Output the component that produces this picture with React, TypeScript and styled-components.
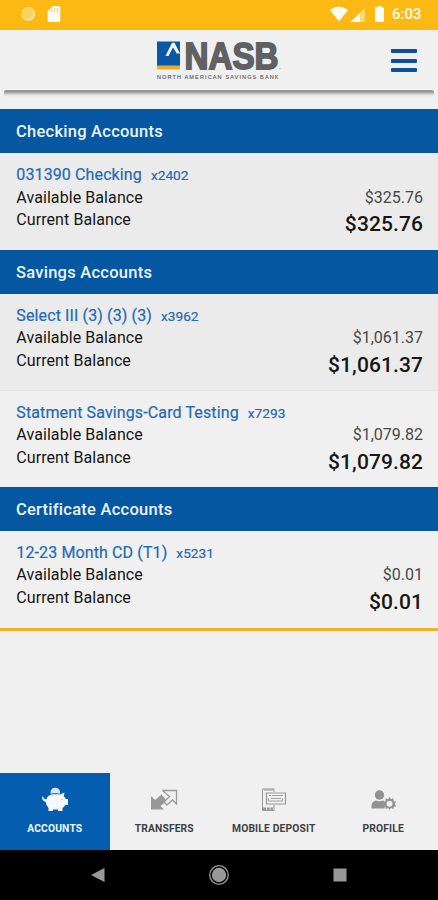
import React from "react";
import styled, { createGlobalStyle } from "styled-components";

const GlobalStyle = createGlobalStyle`
  * { box-sizing: border-box; }
  html, body, #root { margin: 0; height: 100%; }
  body { background: #f0f0f0; overflow: hidden; font-family: Roboto, sans-serif; }
`;

const Screen = styled.div`
  width: 438px;
  height: 900px;
  display: flex;
  flex-direction: column;
  background: #f0f0f0;
`;

const StatusBar = styled.div`
  height: 30px;
  flex: none;
  display: flex;
  align-items: center;
  justify-content: space-between;
  padding: 0 16px 3px 20px;
  background: #fdb913;
`;

const StatusGroup = styled.div`
  display: flex;
  align-items: center;
`;

const Clock = styled.span`
  width: 30px;
  margin-left: 6px;
  padding-top: 1px;
  color: #fffdf3;
  font-size: 15px;
  font-weight: 500;
  line-height: 20px;
  white-space: nowrap;
`;

const Header = styled.header`
  height: 60px;
  flex: none;
  margin: 0 5px;
  display: grid;
  grid-template-columns: 1fr 126px 1fr;
  align-items: start;
  padding: 10px 15px 0 14px;
`;

const HeaderShadow = styled.div`
  height: 7px;
  flex: none;
  margin: 0 4px 12px;
  background: linear-gradient(#a2a2a2, #8f8f8f 20%, #cbcbcb 55%, #e8e8e8 80%, #f0f0f0);
  border-radius: 2px;
`;

const LogoBox = styled.div`
  grid-column: 2;
  height: 42px;
`;

const LogoDrawing = styled.svg`
  display: block;
  overflow: visible;
`;

const MenuButton = styled.button`
  justify-self: end;
  margin-top: 9px;
  width: 27px;
  height: 23px;
  padding: 0;
  border: 0;
  background: none;
  display: flex;
  flex-direction: column;
  justify-content: space-between;
`;

const MenuBar = styled.span`
  width: 26px;
  height: 4px;
  border-radius: 1px;
  background: #10509a;
`;

const AccountList = styled.main`
  flex: none;
  height: 522px;
  border-bottom: 3px solid #eeb02a;
`;

const GroupTitle = styled.h2`
  margin: 0;
  height: 44px;
  padding: 1px 16px 0;
  font-size: 16.5px;
  font-weight: 500;
  line-height: 44px;
  letter-spacing: 0.25px;
  color: #eaf3fc;
  background: #0457a0;
`;

const Account = styled.section<{ $shaded?: boolean }>`
  height: 96.5px;
  padding: 11.2px 15px 0 16.3px;
  background: ${(p) => (p.$shaded ? "#ebebeb" : "#f0f0f0")};
  & + & { border-top: 1px solid #e2e2e2; padding-top: 10.5px; }
`;

const AccountName = styled.div`
  height: 22.5px;
  font-size: 16px;
  line-height: 22.5px;
  letter-spacing: 0.12px;
  color: #2469b5;
  -webkit-text-stroke: 0.2px #2469b5;
`;

const Mask = styled.span`
  margin-left: 9px;
  font-size: 13.7px;
  letter-spacing: 0;
`;

const BalanceRow = styled.div`
  height: 22.5px;
  display: flex;
  justify-content: space-between;
  font-size: 16px;
  line-height: 22.5px;
  letter-spacing: 0.08px;
  color: #161616;
`;

const Available = styled.span`
  color: #484848;
  letter-spacing: 0;
`;

const Current = styled.span`
  font-size: 21px;
  font-weight: 500;
  line-height: 31px;
  letter-spacing: 0.1px;
`;

const TabBar = styled.nav`
  height: 77px;
  flex: none;
  margin-top: auto;
  display: grid;
  grid-template-columns: repeat(4, 1fr);
`;

const Tab = styled.div<{ $active?: boolean }>`
  display: flex;
  flex-direction: column;
  align-items: center;
  padding-top: 14px;
  background: ${(p) => (p.$active ? "#045daf" : "#f0f0f0")};
  color: ${(p) => (p.$active ? "#eef6ff" : "#404040")};
`;

const TabLabel = styled.span`
  margin-top: 9px;
  font-size: 10.3px;
  line-height: 14px;
  font-weight: 700;
  letter-spacing: 0.15px;
  white-space: nowrap;
`;

const SystemBar = styled.div`
  height: 50px;
  flex: none;
  display: grid;
  grid-template-columns: 196px 46px 196px;
  align-items: center;
  justify-items: center;
  background: #000;
`;

const StatusIcons = () => (
  <>
    <svg width="44" height="20" viewBox="0 0 44 20">
      <circle cx="8.3" cy="10" r="7" fill="#ffe193" />
      <circle cx="7.5" cy="9.2" r="5.7" fill="#fed25e" />
      <path d="M33 2h6a1.3 1.3 0 0 1 1.3 1.3v13.4A1.3 1.3 0 0 1 39 18H29a1.3 1.3 0 0 1-1.3-1.3V7z" fill="#fffdf5" />
      <path d="M31.5 5v3M34.5 4v4M37.5 4v4" stroke="#fed05b" strokeWidth="1.2" />
    </svg>
    <StatusGroup>
      <svg width="56" height="20" viewBox="0 0 56 20">
        <path d="M0 6Q9 -1 18 6L9 17.5z" fill="#fffdf5" />
        <path d="M35 4v14H20.500z" fill="#fed86f" />
        <path d="M30 9v9h-9.500z" fill="#fffdf5" />
        <path d="M47.500 2h4v1.500h1.500q1 0 1 1v12.500q0 1-1 1h-7q-1 0-1-1V4.500q0-1 1-1h1.500z" fill="#fffdf5" />
      </svg>
      <Clock>6:03</Clock>
    </StatusGroup>
  </>
);

const Logo = () => (
  <LogoDrawing width="126" height="42" viewBox="0 0 126 42">
    <path d="M1 1.500h23V26H1z" fill="#0858a5" />
    <path d="M1 25.500h23v4H1z" fill="#e9ad2c" />
    <path d="M9.500 16h3l4.500-8.500 3.800 6H24L18.500 2.700H16z" fill="#f4f7fa" />
    <text x="28.500" y="28.700" textLength="94" lengthAdjust="spacingAndGlyphs" fontFamily="Liberation Sans, sans-serif" fontSize="37.500" fontWeight="700" fill="#606163" stroke="#606163" strokeWidth="1.800">NASB</text>
    <circle cx="124" cy="28.500" r="0.600" fill="#999" />
    <text x="1" y="38.800" textLength="121.500" fontFamily="Liberation Sans, sans-serif" fontSize="5.500" fill="#606060" stroke="#606060" strokeWidth="0.150">NORTH AMERICAN SAVINGS BANK</text>
  </LogoDrawing>
);

const PiggyIcon = () => (
  <svg width="28" height="26" viewBox="0 0 28 26" fill="#f6faff">
    <path d="M9.500 5.500a4.800 4.800 0 0 1 9.600 0l-.2 1.200q-4.500-1.300-9.200.1z" fill="#d7e7f6" />
    <path d="M8 8.500Q13 5.500 19 7.500l4.500-2-.7 3.800q1.300 1.200 1.900 2.700H27v6h-2.800q-.9 1.900-2.700 3V24h-4.500v-1.500h-5V24H7.500v-3Q5 18.500 4.700 15 1.300 14 1 10.500l1-1.500q.3 3 3.200 3.500Q6 10 8 8.500z" />
    <path d="M10.500 8.300q4-1.500 7-.3" fill="none" stroke="#74a7d5" strokeWidth="0.600" />
    <circle cx="21" cy="12.500" r="0.800" fill="#8db7dd" />
  </svg>
);

const TransferIcon = () => (
  <svg width="28" height="26" viewBox="0 0 28 26">
    <path d="M1 22.500V9l4 4 6.500-5.500 4 4.500v3l-5 4 3.500 3.500z" fill="#999" />
    <path d="M13 3.500h13.500V17l-4-4-5.500 5-3-3 5.500-5.500-5.800-5z" fill="#f0f0f0" stroke="#999" strokeWidth="1.300" />
  </svg>
);

const DepositIcon = () => (
  <svg width="28" height="26" viewBox="0 0 28 26" fill="none" stroke="#999" strokeWidth="1">
    <path d="M14 5V2H2.500v21.500H14V18" />
    <path d="M4 3h9" strokeWidth="1" />
    <path d="M3 22h10" strokeWidth="3" strokeDasharray="3 .7" />
    <path d="M6.500 6h19v11h-19z" fill="#f0f0f0" strokeWidth="1.200" />
    <path d="M9 8.500h2M12 8.500h11M8.500 11v3h14v-3M11 11.500h10" strokeWidth="0.900" />
  </svg>
);

const ProfileIcon = () => (
  <svg width="28" height="26" viewBox="0 0 28 26">
    <circle cx="10.500" cy="8" r="4.700" fill="#929292" />
    <path d="M2.500 21.500V19q0-4.500 4.500-5.500 3.500 1.500 7 0l1.500.7-.8 2.800 1.300 2-.7 2.500z" fill="#929292" />
    <path d="m20.500 9.800 1.300 2.500 2.700-1 .1 2.900 2.600.5-1.400 2.300 1.400 2.200-2.600.5-.1 2.400-2.700-1-1.300 2-1.300-2-2.500 1-.2-2.400-2.600-.5 1.400-2.200-1.400-2.300 2.600-.5.200-2.900 2.500 1z" fill="#929292" />
    <circle cx="20.500" cy="16.700" r="3" fill="#f0f0f0" />
  </svg>
);

type AccountInfo = { name: string; mask: string; available: string; current: string; shaded?: boolean };

const groups: { title: string; accounts: AccountInfo[] }[] = [
  { title: "Checking Accounts", accounts: [{ name: "031390 Checking", mask: "x2402", available: "$325.76", current: "$325.76", shaded: true }] },
  {
    title: "Savings Accounts",
    accounts: [
      { name: "Select III (3) (3) (3)", mask: "x3962", available: "$1,061.37", current: "$1,061.37", shaded: true },
      { name: "Statment Savings-Card Testing", mask: "x7293", available: "$1,079.82", current: "$1,079.82" },
    ],
  },
  { title: "Certificate Accounts", accounts: [{ name: "12-23 Month CD (T1)", mask: "x5231", available: "$0.01", current: "$0.01" }] },
];

const tabs = [
  { label: "ACCOUNTS", Icon: PiggyIcon, active: true },
  { label: "TRANSFERS", Icon: TransferIcon },
  { label: "MOBILE DEPOSIT", Icon: DepositIcon },
  { label: "PROFILE", Icon: ProfileIcon },
];

export default function App() {
  return (
    <Screen>
      <GlobalStyle />
      <StatusBar><StatusIcons /></StatusBar>
      <Header>
        <LogoBox><Logo /></LogoBox>
        <MenuButton aria-label="Menu"><MenuBar /><MenuBar /><MenuBar /></MenuButton>
      </Header>
      <HeaderShadow />
      <AccountList>
        {groups.map((g) => (
          <React.Fragment key={g.title}>
            <GroupTitle>{g.title}</GroupTitle>
            {g.accounts.map((a) => (
              <Account key={a.mask} $shaded={a.shaded}>
                <AccountName>{a.name}<Mask>{a.mask}</Mask></AccountName>
                <BalanceRow><span>Available Balance</span><Available>{a.available}</Available></BalanceRow>
                <BalanceRow><span>Current Balance</span><Current>{a.current}</Current></BalanceRow>
              </Account>
            ))}
          </React.Fragment>
        ))}
      </AccountList>
      <TabBar>
        {tabs.map(({ label, Icon, active }) => (
          <Tab key={label} $active={active}><Icon /><TabLabel>{label}</TabLabel></Tab>
        ))}
      </TabBar>
      <SystemBar>
        <svg width="14" height="16" viewBox="0 0 14 16"><path d="M13.500 1v14L0 8z" fill="#999" /></svg>
        <svg width="22" height="22" viewBox="0 0 22 22"><circle cx="11" cy="11" r="9.300" fill="none" stroke="#999" strokeWidth="1.300" /><circle cx="11" cy="11" r="7.200" fill="#999" /></svg>
        <svg width="14" height="14" viewBox="0 0 14 14"><path d="M.5.500h13v13H.5z" fill="#999" /></svg>
      </SystemBar>
    </Screen>
  );
}
